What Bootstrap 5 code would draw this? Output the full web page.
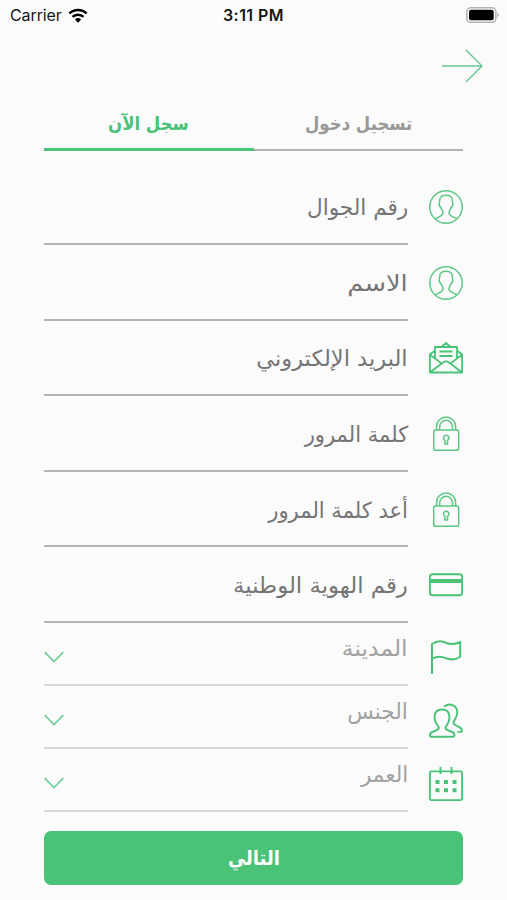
<!DOCTYPE html>
<html lang="ar" dir="rtl">
<head>
<meta charset="utf-8">
<meta name="viewport" content="width=device-width, initial-scale=1">
<title>سجل الآن</title>
<link href="https://cdn.jsdelivr.net/npm/bootstrap@5.3.0/dist/css/bootstrap.min.css" rel="stylesheet">
<style>
  :root { --brand: #4ac277; }
  body { background: #fbfbfb; font-family: "DejaVu Sans", sans-serif; height: 900px; overflow: hidden; }
  .status { height: 30px; font-family: Inter, sans-serif; font-size: 16px; line-height: 30px; color: #161616; padding: 0 8px 0 10px; }
  .carrier { letter-spacing: -.1px; }
  .wifi { margin-left: 6px; }
  .clock { letter-spacing: .45px; }
  .topbar { height: 72px; padding: 19px 24px 0; }
  .page { padding: 0 44px; }
  .tabs { height: 49px; }
  .tab-item { flex: 1 1 0; border: 0; border-bottom: 2px solid #b2b2b2; background: none; color: #999; font-size: 19px; font-weight: 700; line-height: 38px; padding: 0 0 5px; height: 48.5px; }
  .tab-item.on { color: var(--brand); border-bottom: 3px solid var(--brand); height: 49px; }
  .tab-item .txt { transform: scaleX(.87); }
  .fields { padding-top: 18.4px; }
  .field { height: 75.6px; gap: 21px; }
  .ico { width: 34px; flex: none; color: var(--brand); }
  .ico svg { display: block; overflow: visible; }
  .line { border-bottom: 2px solid #b4b4b4; color: #757575; font-size: 22px; line-height: 30px; }
  .field .txt { padding-top: 4px; }
  .pick { height: 63.1px; gap: 21px; }
  .pick .line { border-color: #d7d7d7; color: #a2a2a2; }
  .pick .txt { padding-bottom: 9px; }
  .pick .ico, .pick .chev { padding-top: 7px; }
  .chev { color: #6fcf9a; }
  .txt { display: inline-block; white-space: nowrap; }
  /* condensed or widened setting of each label */
  .line .txt { transform-origin: right center; }
  .t-phone { transform: scaleX(.98); }
  .t-name { transform: scaleX(1.167); }
  .t-mail { transform: scaleX(1.026); }
  .t-pass { transform: scaleX(.957); }
  .t-id { transform: scaleX(1.035); }
  .t-city { transform: scaleX(1.067); }
  .go { height: 54px; margin-top: 19px; background: var(--brand); border-radius: 7px; color: #fff; font-weight: 700; font-size: 20px; }
  .go:hover { background: var(--brand); color: #fff; }
  .go .txt { transform: scaleX(.9); }
</style>
<script src="https://cdn.jsdelivr.net/npm/bootstrap@5.3.0/dist/js/bootstrap.bundle.min.js"></script>
</head>
<body>
<svg width="0" height="0" class="position-absolute" fill="none">
  <symbol id="person" viewBox="0 0 34 34"><g fill="none" stroke="currentColor" stroke-width="1.5" opacity=".88"><circle cx="17" cy="17" r="16.200"/><path d="M6 29C8.500 26.800 13.600 26.800 14 23.200C14.200 20.800 12.500 19.800 11.800 17.200C10.600 16.600 10 15 10.200 13.500C10.200 12.800 10.700 12.500 10.600 11C10.500 6.800 13 5.300 17 5.300S23.500 6.800 23.400 11C23.300 12.500 23.800 12.800 23.800 13.500C24 15 23.400 16.600 22.200 17.200C21.500 19.800 19.800 20.800 20 23.200C20.400 26.800 25.500 26.800 28 29"/></g></symbol>
  <symbol id="lock" viewBox="0 0 34 36"><g fill="none" stroke="currentColor" stroke-width="1.5" opacity=".9"><rect x="4.700" y="14" width="25" height="20.300" rx="1.800"/><path d="M7.600 14v-3.500a9.500 9.500 0 0 1 19 0V14M10.700 14v-3.300a6.400 6.400 0 0 1 12.800 0V14"/><path d="M15.900 24.300a2.700 2.700 0 1 1 2.600 0v3.800h-2.600z"/></g></symbol>
  <symbol id="down" viewBox="0 0 20 12"><path d="M.7 1.200 10 10.500 19.300 1.200" fill="none" stroke="currentColor" stroke-width="1.700"/></symbol>
</svg>

<header class="status d-flex justify-content-between align-items-center position-relative" dir="ltr">
  <div class="d-flex align-items-center"><span class="carrier">Carrier</span>
    <svg class="wifi" width="20" height="15" viewBox="0 0 19 15"><g fill="none" stroke="#000" stroke-width="2.500"><path d="M.9 5.400a12.300 12.300 0 0 1 17.200 0"/><path d="M4 8.900a7.900 7.900 0 0 1 11 0"/></g><path d="M6.400 11.500a4.600 4.600 0 0 1 6.200 0L9.500 14.700z"/></svg>
  </div>
  <span class="clock position-absolute start-50 translate-middle-x fw-semibold text-nowrap">3:11 PM</span>
  <svg width="33" height="17" viewBox="0 0 33 17"><rect x=".8" y=".8" width="29" height="14.500" rx="4" fill="#fff" stroke="#b3b3b3" stroke-width="1.600"/><rect x="3" y="2.800" width="24.700" height="10.500" rx="2"/><path d="M31.300 5.500c2 1 2 4 0 5z" fill="#b3b3b3"/></svg>
</header>

<nav class="topbar">
  <svg class="d-block" width="41" height="34" viewBox="0 0 41 34" fill="none" stroke="#69c995" stroke-width="1.500"><path d="M0 17h40M24 1l16 16-16 16"/></svg>
</nav>

<main class="page">
  <div class="tabs d-flex align-items-start">
    <button class="tab-item"><span class="txt">تسجيل دخول</span></button>
    <button class="tab-item on"><span class="txt">سجل الآن</span></button>
  </div>

  <form class="fields">
    <div class="field d-flex"><div class="ico d-flex align-items-center"><svg width="34" height="34"><use href="#person"/></svg></div><div class="line flex-fill d-flex align-items-center"><span class="txt t-phone">رقم الجوال</span></div></div>
    <div class="field d-flex"><div class="ico d-flex align-items-center"><svg width="34" height="34"><use href="#person"/></svg></div><div class="line flex-fill d-flex align-items-center"><span class="txt t-name">الاسم</span></div></div>
    <div class="field d-flex"><div class="ico d-flex align-items-center"><svg width="34" height="32" viewBox="0 0 34 32" fill="none" stroke="currentColor" stroke-width="1.800" stroke-linejoin="round"><path d="M6 8.500.9 12.500v18h32.200v-18L28 8.500M1 12.800l12.500 9.300M33 12.800l-12.500 9.300M1.200 30.300 14 20.500q3-2.200 6 0l12.800 9.800M6 16.500V5h22v11.500M12.500 4.800 17 1l4.500 3.800M10.500 9.500h13M10.500 14h13"/></svg></div><div class="line flex-fill d-flex align-items-center"><span class="txt t-mail">البريد الإلكتروني</span></div></div>
    <div class="field d-flex"><div class="ico d-flex align-items-center"><svg width="34" height="36"><use href="#lock"/></svg></div><div class="line flex-fill d-flex align-items-center"><span class="txt t-pass">كلمة المرور</span></div></div>
    <div class="field d-flex"><div class="ico d-flex align-items-center"><svg width="34" height="36"><use href="#lock"/></svg></div><div class="line flex-fill d-flex align-items-center"><span class="txt t-pass">أعد كلمة المرور</span></div></div>
    <div class="field d-flex"><div class="ico d-flex align-items-center"><svg width="34" height="24" viewBox="0 0 34 24" fill="none" stroke="currentColor"><rect x=".9" y="1.200" width="32.200" height="21" rx="2.500" stroke-width="1.900"/><path d="M1 8h32" stroke-width="4"/></svg></div><div class="line flex-fill d-flex align-items-center"><span class="txt t-id">رقم الهوية الوطنية</span></div></div>

    <div class="pick d-flex"><div class="ico d-flex align-items-center"><svg width="34" height="34" viewBox="0 0 34 34" fill="none" stroke="currentColor" stroke-width="2"><path d="M3 33V3C10-1.500 14 .5 18 2.200c4.500 1.700 8 1 13.200-1V15.800c-5 3.500-9.500 3.300-14 1.500C12 15 8 15 3 18"/></svg></div><div class="line flex-fill d-flex align-items-center justify-content-between"><span class="txt t-city">المدينة</span><span class="chev"><svg class="d-block" width="20" height="12"><use href="#down"/></svg></span></div></div>
    <div class="pick d-flex"><div class="ico d-flex align-items-center"><svg width="34" height="34" viewBox="0 0 34 34" fill="none" stroke="currentColor" stroke-width="1.900" stroke-linecap="round" stroke-linejoin="round"><path d="M13 5.500c-4.700 0-7.500 3-7.500 7.800 0 4.400 2 6.900 4 9.500 1.500 2-1.500 3.300-5.300 4.700C1.500 28.600.8 29.600.8 31.500c0 .8.500 1.200 1.200 1.200h22.300c.7 0 1.200-.4 1.200-1.200 0-1.900-.7-2.900-3.400-4-3.800-1.400-6.800-2.700-5.300-4.700 2-2.600 3.700-5.100 3.700-9.500 0-4.800-2.800-7.800-7.500-7.800z"/><path d="M15.500 2.300C21-1.500 28.500 1.500 28.300 8.500c-.2 4.300-2 6.500-3.600 9-1.500 2.200.5 3.200 4.300 4.900 3.300 1.500 4 2.500 4 4.300 0 .8-.4 1.200-1.200 1.200h-2.600"/></svg></div><div class="line flex-fill d-flex align-items-center justify-content-between"><span class="txt t-phone">الجنس</span><span class="chev"><svg class="d-block" width="20" height="12"><use href="#down"/></svg></span></div></div>
    <div class="pick d-flex"><div class="ico d-flex align-items-center"><svg width="34" height="34" viewBox="0 0 34 34" fill="none" stroke="currentColor" stroke-width="1.900"><rect x=".9" y="4.400" width="32.200" height="28.700" rx="1.500"/><path d="M11.500 0v7M22.500 0v7"/><path d="M6.500 15h4M15 15h4M23.500 15h4M6.500 23.300h4M15 23.300h4M23.500 23.300h4" stroke-width="4"/></svg></div><div class="line flex-fill d-flex align-items-center justify-content-between"><span class="txt t-phone">العمر</span><span class="chev"><svg class="d-block" width="20" height="12"><use href="#down"/></svg></span></div></div>

    <button type="button" class="go btn border-0 w-100 p-0 d-flex align-items-center justify-content-center"><span class="txt">التالي</span></button>
  </form>
</main>
</body>
</html>
